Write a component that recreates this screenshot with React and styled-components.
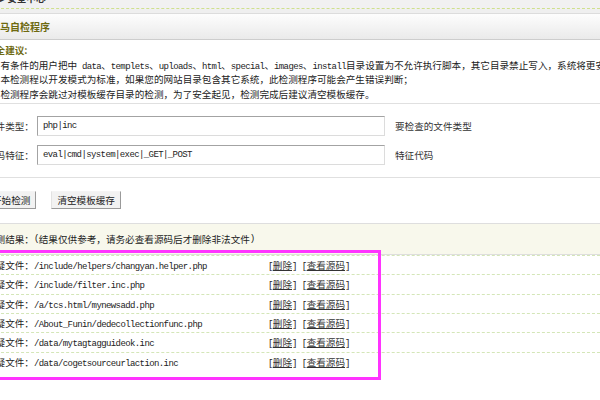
import React from "react";
import styled, { createGlobalStyle } from "styled-components";

const GlobalStyle = createGlobalStyle`
  html {
    overflow: hidden;
  }
  body {
    margin: 0;
    padding: 0;
    background: #fff;
    font-family: "Noto Sans CJK SC", sans-serif;
    font-size: 9.6px;
    color: #222;
  }
`;

const Page = styled.div`
  margin-left: -14px;
  width: calc(100% + 14px);
  padding-bottom: 20px;
`;

const Head = styled.div`
  background: #efefef;
`;

const TopBar = styled.div`
  height: 8px;
  overflow: hidden;
  background: #f1f1f1;
  border-bottom: 1px dashed #cfe08e;
  padding-left: 14px;
`;

const TopText = styled.div`
  margin-top: -10px;
  line-height: 16px;
  font-weight: bold;
  color: #333;
`;

const TitleBar = styled.div`
  margin-top: 4px;
  height: 25px;
  border-top: 1px solid #dcdcdc;
  border-bottom: 1px solid #cdcdcd;
  background: linear-gradient(#fdfdfd, #eaeaea);
  display: flex;
  align-items: center;
  padding-left: 4px;
  font-size: 10px;
  font-weight: bold;
  color: #6e6a10;
`;

const Advice = styled.div`
  padding: 3px 0 2px;
  border-bottom: 1px solid #e0e0e0;
`;

const AdviceTitle = styled.div`
  height: 14.5px;
  line-height: 14.5px;
  font-weight: bold;
  color: #6e6a10;
`;

const Line = styled.div`
  height: 14.5px;
  line-height: 14.5px;
  white-space: nowrap;
`;

const L = styled.span`
  font-family: "Liberation Mono", monospace;
  font-size: 9px;
  letter-spacing: -0.6px;
  line-height: 1;
`;

const FormSection = styled.div`
  padding: 12px 0;
  border-bottom: 1px solid #e0e0e0;
  display: flex;
  flex-direction: column;
  gap: 9px;
`;

const FieldRow = styled.div`
  display: flex;
  align-items: center;
  height: 20px;
`;

const Label = styled.span`
  width: 51px;
  flex: none;
  color: #333;
`;

const Input = styled.input`
  box-sizing: border-box;
  width: 348px;
  height: 20px;
  padding: 0 5px;
  border: 1px solid;
  border-color: #a3a3a3 #dcdcdc #dcdcdc #a3a3a3;
  background: #fff;
  font-family: "Liberation Mono", monospace;
  font-size: 9px;
  letter-spacing: -0.6px;
  color: #222;
  outline: none;
`;

const Hint = styled.span`
  margin-left: 10px;
  color: #333;
`;

const ButtonRow = styled.div`
  padding: 13px 0 14px;
  display: flex;
  gap: 15px;
  height: 18px;
`;

const Button = styled.button`
  height: 18px;
  padding: 0 5px;
  border: 1px solid;
  border-color: #f4f4f4 #9a9a9a #9a9a9a #e2e2e2;
  background: #f2f2f2;
  font-family: "Noto Sans CJK SC", sans-serif;
  font-size: 9.6px;
  color: #222;
  line-height: 16px;
`;

const ResultBar = styled.div`
  height: 30px;
  background: #f8f8ec;
  border-top: 1px solid #dedede;
  border-bottom: 1px solid #dedede;
  display: flex;
  align-items: center;
  color: #222;
  white-space: nowrap;
`;

const Results = styled.div`
  position: relative;
`;

const Row = styled.div`
  box-sizing: border-box;
  height: 19.33px;
  border-top: 1px dashed #d4e6b8;
  display: grid;
  grid-template-columns: 282px auto;
  align-items: center;
  white-space: nowrap;
`;

const Actions = styled.span`
  display: flex;
  gap: 5px;
`;

const Link = styled.a`
  color: #333;
  text-decoration: underline;
`;

const Highlight = styled.div`
  position: absolute;
  left: -6px;
  top: -5px;
  width: 401px;
  height: 130px;
  box-sizing: border-box;
  border: 3px solid #ff33ff;
  pointer-events: none;
`;

const files = [
  "/include/helpers/changyan.helper.php",
  "/include/filter.inc.php",
  "/a/tcs.html/mynewsadd.php",
  "/About_Funin/dedecollectionfunc.php",
  "/data/mytagtagguideok.inc",
  "/data/cogetsourceurlaction.inc",
];

function Action({ children }) {
  return (
    <span>
      <L>[</L>
      <Link href="#">{children}</Link>
      <L>]</L>
    </span>
  );
}

export default function App() {
  return (
    <Page>
      <GlobalStyle />
      <Head>
        <TopBar>
          <TopText>▸ 安全中心</TopText>
        </TopBar>
        <TitleBar>木马自检程序</TitleBar>
      </Head>

      <Advice>
        <AdviceTitle>安全建议:</AdviceTitle>
        <Line>
          <L>1</L>、有条件的用户把中<L> data</L>、<L>templets</L>、<L>uploads</L>、<L>html</L>、<L>special</L>、<L>images</L>、<L>install</L>目录设置为不允许执行脚本，其它目录禁止写入，系统将更安全；
        </Line>
        <Line>
          <L>2</L>、本检测程以开发模式为标准，如果您的网站目录包含其它系统，此检测程序可能会产生错误判断；
        </Line>
        <Line>
          <L>3</L>、检测程序会跳过对模板缓存目录的检测，为了安全起见，检测完成后建议清空模板缓存。
        </Line>
      </Advice>

      <FormSection>
        <FieldRow>
          <Label>文件类型：</Label>
          <Input defaultValue="php|inc" />
          <Hint>要检查的文件类型</Hint>
        </FieldRow>
        <FieldRow>
          <Label>代码特征：</Label>
          <Input defaultValue="eval|cmd|system|exec|_GET|_POST" />
          <Hint>特征代码</Hint>
        </FieldRow>
      </FormSection>

      <ButtonRow>
        <Button>开始检测</Button>
        <Button>清空模板缓存</Button>
      </ButtonRow>

      <ResultBar>
        检测结果：<L>(</L>结果仅供参考，请务必查看源码后才删除非法文件<L>)</L>
      </ResultBar>

      <Results>
        {files.map((f) => (
          <Row key={f}>
            <span>
              可疑文件：<L>{f}</L>
            </span>
            <Actions>
              <Action>删除</Action>
              <Action>查看源码</Action>
            </Actions>
          </Row>
        ))}
        <Highlight />
      </Results>
    </Page>
  );
}
